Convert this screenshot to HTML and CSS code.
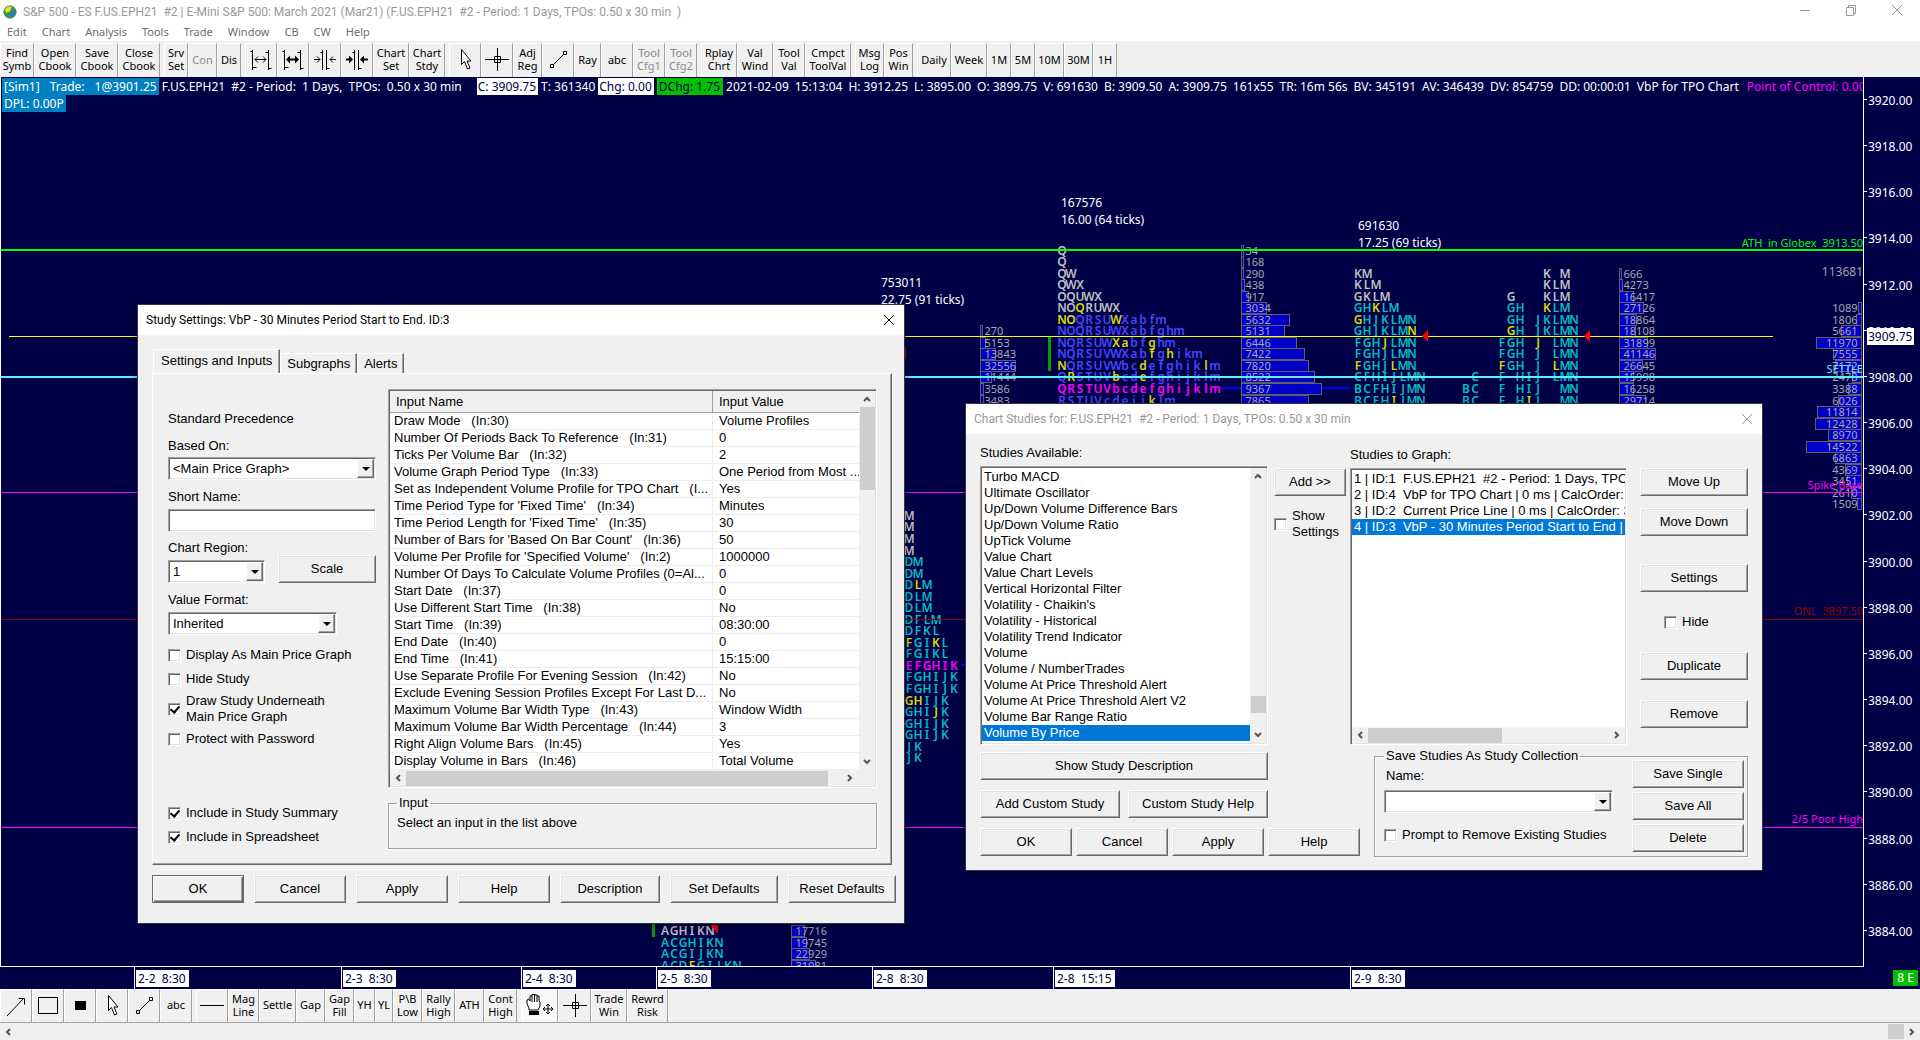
FILE: index.html
```html
<!DOCTYPE html>
<html lang="en">
<head>
<meta charset="utf-8">
<title>S&amp;P 500 - ES F.US.EPH21 #2</title>
<link rel="stylesheet" href="styles.css">
</head>
<body>
<svg class="defs" aria-hidden="true">
  <symbol id="i-cursor" viewBox="0 0 24 24"><path d="M8.500 2.500v15l3-3 3 7.500 2.500-1-3-7h4z" fill="#fff" stroke="#000"/></symbol>
  <symbol id="i-cross" viewBox="0 0 24 24"><path d="M0 12.500h24M12.500 1v23M9.500 9.500h6v6h-6z" fill="none" stroke="#000"/></symbol>
  <symbol id="i-line" viewBox="0 0 24 24"><path d="M7 18L18 7M4.500 17.500h3v3h-3zM17.500 4.500h3v3h-3z" fill="none" stroke="#000"/></symbol>
  <symbol id="i-close" viewBox="0 0 12 12"><path d="M1 1l10 10M11 1L1 11" fill="none" stroke="currentColor"/></symbol>
  <symbol id="i-up" viewBox="0 0 10 10"><path d="M2 7l3-3 3 3" fill="none" stroke="#555" stroke-width="2"/></symbol>
  <symbol id="i-down" viewBox="0 0 10 10"><path d="M2 3l3 3 3-3" fill="none" stroke="#555" stroke-width="2"/></symbol>
  <symbol id="i-left" viewBox="0 0 10 10"><path d="M7 2L4 5l3 3" fill="none" stroke="#555" stroke-width="2"/></symbol>
  <symbol id="i-right" viewBox="0 0 10 10"><path d="M3 2l3 3-3 3" fill="none" stroke="#555" stroke-width="2"/></symbol>
</svg>

<div class="app">
  <header class="titlebar">
    <svg class="logo" viewBox="0 0 16 16"><circle cx="8" cy="8" r="7" fill="#3c9a2e"/><path d="M2 5q3-5 8-3l-2 5-4 2z" fill="#e6e23c"/><path d="M9 8l5-3q2 6-4 9l-3-3z" fill="#2b79c9"/><circle cx="8" cy="8" r="7" fill="none" stroke="#3b7a55"/></svg>
    <h1 class="title">S&amp;P 500 - ES F.US.EPH21&nbsp; #2 | E-Mini S&amp;P 500: March 2021 (Mar21) (F.US.EPH21&nbsp; #2 - Period: 1 Days, TPOs: 0.50 x 30 min&nbsp; )</h1>
    <div class="winctl">
      <button aria-label="Minimize"><svg viewBox="0 0 12 12"><path d="M1 6.500h10" stroke="#999"/></svg></button>
      <button aria-label="Restore"><svg viewBox="0 0 12 12"><path d="M1.500 3.500h7v8h-7zM3.500 3.500v-2h7v8h-2" fill="none" stroke="#999"/></svg></button>
      <button aria-label="Close"><svg viewBox="0 0 12 12"><use href="#i-close"/></svg></button>
    </div>
  </header>
  <nav class="menubar">
    <a href="#">Edit</a><a href="#">Chart</a><a href="#">Analysis</a><a href="#">Tools</a><a href="#">Trade</a><a href="#">Window</a><a href="#">CB</a><a href="#">CW</a><a href="#">Help</a>
  </nav>

  <div class="toolbar">
    <div class="group"><button class="w34">Find<br>Symb</button><button class="w42">Open<br>Cbook</button><button class="w42">Save<br>Cbook</button><button class="w42">Close<br>Cbook</button></div>
    <div class="group"><button class="w24">Srv<br>Set</button><button class="w29 off">Con</button><button class="w24">Dis</button></div>
    <div class="group">
      <button class="w32" aria-label="Widen spacing"><svg viewBox="0 0 24 24"><path d="M3.500 3v20M3.500 4.500h-2M3.500 20.500h4M19.500 3v20M19.500 5.500h-3M19.500 21.500h3M6 12.500h11M9 9.500l-3 3 3 3M14 9.500l3 3-3 3" fill="none" stroke="#000"/></svg></button>
      <button class="w32" aria-label="Widen bars"><svg viewBox="0 0 24 24"><path d="M3.500 3v20M3.500 4.500h-2M3.500 20.500h4M19.500 3v20M19.500 5.500h-3M19.500 21.500h3" fill="none" stroke="#000"/><path d="M7 12.500h9" stroke="#000" stroke-width="2"/><path d="M5 12.500l4-4v8zM18 12.500l-4-4v8z"/></svg></button>
      <button class="w32" aria-label="Narrow spacing"><svg viewBox="0 0 24 24"><path d="M9.500 3v20M9.500 5.500h-2M13.500 3v20M13.500 21.500h3M1 12.500h6M4 9.500l3 3-3 3M23 12.500h-6M20 9.500l-3 3 3 3" fill="none" stroke="#000"/></svg></button>
      <button class="w32" aria-label="Narrow bars"><svg viewBox="0 0 24 24"><path d="M9.500 3v20M9.500 5.500h-2M13.500 3v20M13.500 21.500h3" fill="none" stroke="#000"/><path d="M1 12.500h5M23 12.500h-5" stroke="#000" stroke-width="2"/><path d="M8 12.500l-4-4v8zM15 12.500l4-4v8z"/></svg></button>
      <button class="w36">Chart<br>Set</button><button class="w36">Chart<br>Stdy</button>
    </div>
    <div class="group">
      <button class="w32" aria-label="Pointer"><svg viewBox="0 0 24 24"><use href="#i-cursor"/></svg></button>
      <button class="w32" aria-label="Crosshair"><svg viewBox="0 0 24 24"><use href="#i-cross"/></svg></button>
      <button class="w29">Adj<br>Reg</button>
      <button class="w32" aria-label="Line"><svg viewBox="0 0 24 24"><use href="#i-line"/></svg></button>
      <button class="w27">Ray</button><button class="w32">abc</button><button class="w32 off">Tool<br>Cfg1</button><button class="w32 off">Tool<br>Cfg2</button>
    </div>
    <div class="group"><button class="w36">Rplay<br>Chrt</button><button class="w36">Val<br>Wind</button><button class="w32">Tool<br>Val</button><button class="w46">Cmpct<br>ToolVal</button></div>
    <div class="group"><button class="w29">Msg<br>Log</button><button class="w29">Pos<br>Win</button></div>
    <div class="group"><button class="w34">Daily</button><button class="w36">Week</button><button class="w24">1M</button><button class="w24">5M</button><button class="w29">10M</button><button class="w29">30M</button><button class="w24">1H</button></div>
  </div>

  <main class="chart">
    <div class="plot">
      <svg id="plot" class="canvas"></svg>
      <div class="info">
        <div class="seg trade"><span>[Sim1]</span><span>Trade:</span><span>1@3901.25</span></div>
        <div class="seg name"><span>F.US.EPH21</span><span>#2 - Period:</span><span>1 Days,</span><span>TPOs:</span><span>0.50 x 30 min</span></div>
        <span class="hl">C: 3909.75</span><span>T: 361340</span><span class="hl">Chg: 0.00</span><span class="up">DChg: 1.75</span>
        <div class="seg quote"><span>2021-02-09</span><span>15:13:04</span><span>H: 3912.25</span><span>L: 3895.00</span><span>O: 3899.75</span><span>V: 691630</span><span>B: 3909.50</span><span>A: 3909.75</span><span>161x55</span><span>TR: 16m 56s</span><span>BV: 345191</span><span>AV: 346439</span><span>DV: 854759</span><span>DD: 00:00:01</span><span>VbP for TPO Chart</span></div>
        <span class="poc">Point of Control: 0.00</span>
      </div>
      <div class="info"><span class="trade">DPL: 0.00P</span></div>
    </div>
    <svg id="prices" class="prices"></svg>
    <svg id="dates" class="dates"></svg>
    <div class="corner"><span>8 E</span></div>
  </main>

  <div class="toolbar bottom">
    <div class="group">
      <button class="w32" aria-label="Arrow"><svg viewBox="0 0 24 24"><path d="M3 23L20 5M14.500 5.500h6v6" fill="none" stroke="#000"/></svg></button>
      <button class="w32" aria-label="Rectangle"><svg viewBox="0 0 24 24"><path d="M2.500 4.500h19v16h-19z" fill="none" stroke="#000"/></svg></button>
      <button class="w32" aria-label="Filled rectangle"><svg viewBox="0 0 24 24"><path d="M7 8h11v9H7z"/></svg></button>
      <button class="w32" aria-label="Pointer"><svg viewBox="0 0 24 24"><use href="#i-cursor"/></svg></button>
      <button class="w32" aria-label="Line"><svg viewBox="0 0 24 24"><use href="#i-line"/></svg></button>
      <button class="w32">abc</button>
    </div>
    <div class="group">
      <button class="w32" aria-label="Horizontal line"><svg viewBox="0 0 24 24"><path d="M0 12.500h24" stroke="#000"/></svg></button>
      <button class="w31">Mag<br>Line</button><button class="w37">Settle</button><button class="w29">Gap</button><button class="w29">Gap<br>Fill</button><button class="w21">YH</button><button class="w18">YL</button><button class="w29">P\B<br>Low</button><button class="w33">Rally<br>High</button><button class="w29">ATH</button><button class="w33">Cont<br>High</button>
    </div>
    <div class="group">
      <button class="w37 pressed" aria-label="Hand"><svg class="wide" viewBox="0 0 30 24"><path d="M4 17v-2l-2-4V7l2-1 1 2V3h2V1.500h3V2h2v1h2v5l1 1v4l-2 4z" fill="#fff" stroke="#000"/><path d="M7 3v6M9.500 2v7M12 3v6" stroke="#000"/><path d="M4 18h10v4H4z"/><path d="M18 16h10M23 11v10M20 14l-2 2 2 2M26 14l2 2-2 2M21 13l2-2 2 2M21 19l2 2 2-2" fill="none" stroke="#000"/></svg></button>
      <button class="w33" aria-label="Crosshair"><svg viewBox="0 0 24 24"><use href="#i-cross"/></svg></button>
      <button class="w36">Trade<br>Win</button><button class="w41">Rewrd<br>Risk</button>
    </div>
  </div>
  <div class="hscroll page"><svg viewBox="0 0 10 10"><use href="#i-left"/></svg><i></i><svg viewBox="0 0 10 10"><use href="#i-right"/></svg></div>
</div>

<section class="dialog settings" aria-label="Study Settings">
  <div class="dtitle"><h2>Study Settings: VbP - 30 Minutes Period Start to End. ID:3</h2><button aria-label="Close"><svg viewBox="0 0 12 12"><use href="#i-close"/></svg></button></div>
  <div class="sbody">
    <div class="tabs"><button class="tab on">Settings and Inputs</button><button class="tab">Subgraphs</button><button class="tab">Alerts</button></div>
    <div class="panel">
      <div class="left">
        <p class="prec">Standard Precedence</p>
        <label for="based">Based On:</label>
        <span class="sel"><select id="based"><option>&lt;Main Price Graph&gt;</option></select><i></i></span>
        <label for="short">Short Name:</label>
        <input class="txt" id="short" type="text">
        <div class="region">
          <div class="rcol"><label for="region">Chart Region:</label><span class="sel"><select id="region"><option>1</option></select><i></i></span></div>
          <button class="btn">Scale</button>
        </div>
        <label for="format">Value Format:</label>
        <span class="sel mid"><select id="format"><option>Inherited</option></select><i></i></span>
        <div class="checks">
          <label class="check"><input type="checkbox">Display As Main Price Graph</label>
          <label class="check"><input type="checkbox">Hide Study</label>
          <label class="check two"><input type="checkbox" checked><span>Draw Study Underneath<br>Main Price Graph</span></label>
          <label class="check"><input type="checkbox">Protect with Password</label>
        </div>
        <div class="checks low">
          <label class="check"><input type="checkbox" checked>Include in Study Summary</label>
          <label class="check"><input type="checkbox" checked>Include in Spreadsheet</label>
        </div>
      </div>
      <div class="right">
        <div class="listview">
          <table>
            <thead><tr><th>Input Name</th><th>Input Value</th></tr></thead>
            <tbody>
              <tr><td>Draw Mode&nbsp;&nbsp; (In:30)</td><td>Volume Profiles</td></tr>
              <tr><td>Number Of Periods Back To Reference&nbsp;&nbsp; (In:31)</td><td>0</td></tr>
              <tr><td>Ticks Per Volume Bar&nbsp;&nbsp; (In:32)</td><td>2</td></tr>
              <tr><td>Volume Graph Period Type&nbsp;&nbsp; (In:33)</td><td>One Period from Most ...</td></tr>
              <tr><td>Set as Independent Volume Profile for TPO Chart&nbsp;&nbsp; (I...</td><td>Yes</td></tr>
              <tr><td>Time Period Type for 'Fixed Time'&nbsp;&nbsp; (In:34)</td><td>Minutes</td></tr>
              <tr><td>Time Period Length for 'Fixed Time'&nbsp;&nbsp; (In:35)</td><td>30</td></tr>
              <tr><td>Number of Bars for 'Based On Bar Count'&nbsp;&nbsp; (In:36)</td><td>50</td></tr>
              <tr><td>Volume Per Profile for 'Specified Volume'&nbsp;&nbsp; (In:2)</td><td>1000000</td></tr>
              <tr><td>Number Of Days To Calculate Volume Profiles (0=Al...</td><td>0</td></tr>
              <tr><td>Start Date&nbsp;&nbsp; (In:37)</td><td>0</td></tr>
              <tr><td>Use Different Start Time&nbsp;&nbsp; (In:38)</td><td>No</td></tr>
              <tr><td>Start Time&nbsp;&nbsp; (In:39)</td><td>08:30:00</td></tr>
              <tr><td>End Date&nbsp;&nbsp; (In:40)</td><td>0</td></tr>
              <tr><td>End Time&nbsp;&nbsp; (In:41)</td><td>15:15:00</td></tr>
              <tr><td>Use Separate Profile For Evening Session&nbsp;&nbsp; (In:42)</td><td>No</td></tr>
              <tr><td>Exclude Evening Session Profiles Except For Last D...</td><td>No</td></tr>
              <tr><td>Maximum Volume Bar Width Type&nbsp;&nbsp; (In:43)</td><td>Window Width</td></tr>
              <tr><td>Maximum Volume Bar Width Percentage&nbsp;&nbsp; (In:44)</td><td>3</td></tr>
              <tr><td>Right Align Volume Bars&nbsp;&nbsp; (In:45)</td><td>Yes</td></tr>
              <tr><td>Display Volume in Bars&nbsp;&nbsp; (In:46)</td><td>Total Volume</td></tr>
            </tbody>
          </table>
          <div class="vscroll"><svg viewBox="0 0 10 10"><use href="#i-up"/></svg><i></i><svg viewBox="0 0 10 10"><use href="#i-down"/></svg></div>
          <div class="hscroll"><svg viewBox="0 0 10 10"><use href="#i-left"/></svg><i></i><svg viewBox="0 0 10 10"><use href="#i-right"/></svg></div>
        </div>
        <fieldset><legend>Input</legend>Select an input in the list above</fieldset>
      </div>
    </div>
    <div class="actions"><button class="btn default">OK</button><button class="btn">Cancel</button><button class="btn">Apply</button><button class="btn">Help</button><button class="btn b100">Description</button><button class="btn b108">Set Defaults</button><button class="btn b108">Reset Defaults</button></div>
  </div>
</section>

<section class="dialog studies" aria-label="Chart Studies">
  <div class="dtitle idle"><h2>Chart Studies for: F.US.EPH21&nbsp; #2 - Period: 1 Days, TPOs: 0.50 x 30 min</h2><button aria-label="Close"><svg viewBox="0 0 12 12"><use href="#i-close"/></svg></button></div>
  <div class="cbody">
    <div class="avail">
      <p>Studies Available:</p>
      <div class="listbox">
        <ul>
          <li>Turbo MACD</li><li>Ultimate Oscillator</li><li>Up/Down Volume Difference Bars</li><li>Up/Down Volume Ratio</li><li>UpTick Volume</li><li>Value Chart</li><li>Value Chart Levels</li><li>Vertical Horizontal Filter</li><li>Volatility - Chaikin's</li><li>Volatility - Historical</li><li>Volatility Trend Indicator</li><li>Volume</li><li>Volume / NumberTrades</li><li>Volume At Price Threshold Alert</li><li>Volume At Price Threshold Alert V2</li><li>Volume Bar Range Ratio</li><li class="cur">Volume By Price</li><li>Volume By Price Range Bars</li>
        </ul>
        <div class="vscroll"><svg viewBox="0 0 10 10"><use href="#i-up"/></svg><i></i><svg viewBox="0 0 10 10"><use href="#i-down"/></svg></div>
      </div>
      <button class="btn">Show Study Description</button>
      <div class="pair"><button class="btn">Add Custom Study</button><button class="btn">Custom Study Help</button></div>
      <div class="four"><button class="btn">OK</button><button class="btn">Cancel</button><button class="btn">Apply</button><button class="btn">Help</button></div>
    </div>
    <div class="add">
      <button class="btn">Add &gt;&gt;</button>
      <label class="check two"><input type="checkbox"><span>Show<br>Settings</span></label>
    </div>
    <div class="graph">
      <div class="top">
        <div class="list2">
          <p>Studies to Graph:</p>
          <div class="listbox">
            <ul>
              <li>1 | ID:1&nbsp; F.US.EPH21&nbsp; #2 - Period: 1 Days, TPOs: 0.50</li><li>2 | ID:4&nbsp; VbP for TPO Chart | 0 ms | CalcOrder: 2</li><li>3 | ID:2&nbsp; Current Price Line | 0 ms | CalcOrder: 3</li><li class="cur">4 | ID:3&nbsp; VbP - 30 Minutes Period Start to End | 0 ms</li>
            </ul>
            <div class="hscroll"><svg viewBox="0 0 10 10"><use href="#i-left"/></svg><i></i><svg viewBox="0 0 10 10"><use href="#i-right"/></svg></div>
          </div>
        </div>
        <div class="ops">
          <button class="btn">Move Up</button><button class="btn">Move Down</button><button class="btn sp">Settings</button>
          <label class="check"><input type="checkbox">Hide</label>
          <button class="btn">Duplicate</button><button class="btn last">Remove</button>
        </div>
      </div>
      <fieldset>
        <legend>Save Studies As Study Collection</legend>
        <div class="coll">
          <label for="coll">Name:</label>
          <span class="sel"><select id="coll"><option></option></select><i></i></span>
          <label class="check"><input type="checkbox">Prompt to Remove Existing Studies</label>
        </div>
        <div class="saves"><button class="btn">Save Single</button><button class="btn">Save All</button><button class="btn">Delete</button></div>
      </fieldset>
    </div>
  </div>
</section>
<script src="chart.js"></script>
</body>
</html>
```
FILE: styles.css
```css
* { box-sizing: border-box; }
body { margin: 0; background: #f0f0f0; font: 12px/17px "Noto Sans", "Open Sans", sans-serif; color: #000; overflow: hidden; }
button, input, select { font: inherit; color: inherit; margin: 0; padding: 0; border-radius: 0; }
h1, h2, p, ul { margin: 0; padding: 0; font-weight: normal; list-style: none; }
.defs { position: absolute; width: 0; height: 0; }
.app { display: flex; flex-direction: column; height: 100vh; }

.titlebar { display: flex; align-items: center; height: 23px; background: #fff; color: #999; padding-left: 3px; flex: none; }
.logo { width: 14px; height: 16px; margin-right: 6px; }
.title { font: 12px/22px Roboto, "Noto Sans", sans-serif; flex: 1; white-space: nowrap; }
.winctl { display: flex; }
.winctl button { width: 46px; height: 20px; border: 0; background: none; color: #999; }
.winctl svg { width: 12px; height: 12px; }
.menubar { display: flex; gap: 15px; height: 18px; padding-left: 7px; background: #fff; flex: none; font-size: 11px; line-height: 18px; }
.menubar a { color: #6d6d6d; text-decoration: none; }

.toolbar { display: flex; gap: 4px; height: 36px; padding-top: 2px; background: #f0f0f0; flex: none; }
.group { display: flex; }
.toolbar button { border: 0; border-left: 1px solid #fff; border-top: 1px solid #fff; border-right: 1px solid #a0a0a0; background: #f0f0f0; font-size: 11px; line-height: 13px; padding-bottom: 3px; display: flex; align-items: center; justify-content: center; white-space: nowrap; overflow: hidden; }
.toolbar .off { color: #8a8a8a; }
.toolbar svg { width: 24px; height: 24px; flex: none; }
.toolbar svg.wide { width: 30px; }
.toolbar .pressed { background: #f8f8f8; }
.bottom { padding-top: 0; height: 34px; border-bottom: 1px solid #a0a0a0; background: #f0f0f0; }
.w18 { width: 18px; } .w21 { width: 21px; } .w24 { width: 24px; } .w27 { width: 27px; } .w29 { width: 29px; } .w31 { width: 31px; } .w32 { width: 32px; } .w33 { width: 33px; } .w34 { width: 34px; } .w36 { width: 36px; } .w37 { width: 37px; } .w41 { width: 41px; } .w42 { width: 42px; } .w46 { width: 46px; }

.chart { flex: 1; display: grid; grid-template-columns: 1fr 56px; grid-template-rows: 1fr 22px; background: #000047; color: #fff; min-height: 0; }
.plot { position: relative; overflow: hidden; border: solid #fff; border-width: 0 1px 1px; padding: 1px 0 0 1px; min-width: 0; }
.canvas { position: absolute; left: 0; top: 0; width: 100%; height: 100%; }
.prices, .dates { width: 100%; height: 100%; }
.info { display: flex; position: relative; gap: 3px; white-space: nowrap; font-size: 12px; line-height: 17px; }
.seg { display: flex; gap: 6px; flex: none; }
.info > span { flex: none; }
.info .trade { background: #0080c0; padding: 0 2px; gap: 10px; }
.info .name { padding-right: 12px; }
.info .hl { background: #fff; color: #000047; padding: 0 2px 0 1px; }
.info .up { background: #00c000; color: #000047; padding: 0 3px 0 2px; }
.info .poc { color: #f0f; padding-left: 5px; }
.corner { display: flex; justify-content: flex-end; align-items: center; padding-right: 2px; }
.corner span { background: #00c000; padding: 0 4px; line-height: 16px; }
.t12 { font-size: 12px; } .t11 { font-size: 11px; }
.tpo { font-size: 12px; font-weight: 600; text-anchor: middle; }
.end { text-anchor: end; }

.hscroll, .vscroll { display: flex; background: #f0f0f0; align-items: center; }
.hscroll { height: 16px; } .vscroll { width: 16px; flex-direction: column; }
.hscroll svg, .vscroll svg { width: 10px; height: 10px; flex: none; margin: 3px; }
.hscroll i, .vscroll i { background: #cdcdcd; display: block; }
.hscroll i { height: 15px; } .vscroll i { width: 15px; }
.page { height: 17px; flex: none; }
.page i { width: 16px; margin-left: auto; }

.dialog { position: absolute; border: 1px solid #33334d; background: #f0f0f0; font: 13px/16px "Liberation Sans", Arial, sans-serif; box-shadow: 0 2px 8px rgba(0,0,0,.4); }
.dtitle { display: flex; justify-content: space-between; height: 30px; background: #fff; padding: 0 6px 0 8px; align-items: center; }
.dtitle h2 { font: 12px/30px Roboto, "Noto Sans", sans-serif; white-space: nowrap; }
.dtitle button { border: 0; background: none; width: 18px; height: 18px; line-height: 0; }
.dtitle svg { width: 12px; height: 12px; }
.idle { color: #999; }
.btn { height: 28px; background: #f0f0f0; border: 1px solid; border-color: #fff #696969 #696969 #fff; box-shadow: inset 1px 1px #e3e3e3, inset -1px -1px #a0a0a0; white-space: nowrap; }
.btn.default { border-color: #696969; box-shadow: inset 1px 1px #fff, inset -1px -1px #696969, inset -2px -2px #a0a0a0; }
.sel { display: flex; height: 23px; background: #fff; border: 1px solid; border-color: #a0a0a0 #fff #fff #a0a0a0; box-shadow: inset 1px 1px #696969, inset -1px -1px #e3e3e3; position: relative; }
.sel select { appearance: none; border: 0; background: none; width: 100%; padding-left: 4px; outline: 0; }
.sel i { position: absolute; right: 1px; top: 1px; bottom: 1px; width: 17px; background: #f0f0f0; border: 1px solid; border-color: #fff #696969 #696969 #fff; box-shadow: inset -1px -1px #a0a0a0; pointer-events: none; }
.sel i::after { content: ""; position: absolute; left: 4px; top: 7px; border: solid transparent; border-width: 4px 4px 0; border-top-color: #000; }
.txt { display: block; width: 100%; height: 23px; background: #fff; border: 1px solid; border-color: #a0a0a0 #fff #fff #a0a0a0; box-shadow: inset 1px 1px #696969, inset -1px -1px #e3e3e3; }
.check { display: flex; align-items: center; gap: 5px; height: 24px; white-space: nowrap; }
.check.two { height: 36px; }
.check input { appearance: none; width: 13px; height: 13px; background: #fff; border: 1px solid; border-color: #a0a0a0 #fff #fff #a0a0a0; box-shadow: inset 1px 1px #696969, inset -1px -1px #e3e3e3; display: grid; place-items: center; flex: none; }
.check input:checked::after { content: ""; width: 4px; height: 7px; border: solid #000; border-width: 0 2px 2px 0; transform: rotate(40deg); margin-bottom: 2px; }
.listview, .listbox { background: #fff; border: 1px solid; border-color: #a0a0a0 #fff #fff #a0a0a0; box-shadow: inset 1px 1px #696969, inset -1px -1px #e3e3e3; padding: 1px; }
fieldset { margin: 0; border: 1px solid #a0a0a0; box-shadow: 1px 1px #fff, inset 1px 1px #fff; min-width: 0; }
legend { padding: 0 2px; line-height: 16px; }

.settings { left: 137px; top: 304px; width: 768px; height: 620px; }
.sbody { padding: 15px 8px 0 14px; }
.tabs { display: flex; align-items: flex-end; height: 23px; padding-left: 1px; position: relative; z-index: 1; }
.tab { height: 20px; border: 1px solid; border-color: #fff #696969 transparent #fff; border-bottom: 0; box-shadow: inset -1px 0 #a0a0a0; background: #f0f0f0; padding: 0 6px; white-space: nowrap; }
.tab.on { height: 24px; padding: 0 7px 2px; }
.panel { display: flex; gap: 12px; height: 492px; margin-right: 4px; padding: 15px 14px 0 15px; border: 1px solid; border-color: #fff #696969 #696969 #fff; box-shadow: inset -1px -1px #a0a0a0; }
.left { width: 208px; display: flex; flex-direction: column; }
.left label { line-height: 16px; white-space: nowrap; }
.prec { margin: 22px 0 11px; }
.left > .sel { margin: 3px 0 9px; }
.left > label { height: 16px; }
.left .txt { margin: 4px 0 8px; }
.region { display: flex; align-items: flex-end; gap: 13px; margin-bottom: 9px; }
.rcol { width: 97px; display: flex; flex-direction: column; gap: 4px; }
.region .btn { flex: 1; }
.left > .sel.mid { width: 169px; margin: 4px 0 8px; }
.checks { margin-bottom: 50px; }
.low { margin: 0; }
.right { flex: 1; min-width: 0; }
.listview { display: grid; grid-template-columns: 1fr 16px; height: 399px; }
.listview table { border-collapse: separate; border-spacing: 0; table-layout: fixed; width: 100%; height: 379px; }
th { background: #f0f0f0; text-align: left; font-weight: normal; height: 22px; padding: 0 6px; border-right: 1px solid #a0a0a0; border-bottom: 1px solid #a0a0a0; line-height: 18px; }
th:first-child { width: 323px; }
th:last-child { border-right: 0; }
td { height: 17px; padding: 0 0 0 4px; border-bottom: 1px solid #eee; border-right: 1px solid #eee; line-height: 16px; white-space: nowrap; overflow: hidden; }
td:last-child { padding-left: 6px; border-right: 0; }
.listview .vscroll i { height: 83px; }
.listview .vscroll svg:last-child { margin-top: auto; }
.listview .hscroll { grid-column: 1 / -1; }
.listview .hscroll i { width: 422px; }
.listview .hscroll svg:last-child { margin-left: 17px; }
.right fieldset { height: 54px; margin-top: 7px; padding: 4px 8px; }
.actions { display: flex; gap: 10px; margin-top: 10px; }
.actions .btn { width: 92px; } .actions .b100 { width: 100px; } .actions .b108 { width: 108px; }

.studies { left: 965px; top: 403px; width: 798px; height: 468px; }
.cbody { display: flex; gap: 6px; padding: 10px 14px 0; }
.avail { width: 288px; display: flex; flex-direction: column; }
.avail p { line-height: 16px; margin: 1px 0 5px; }
.avail .listbox { display: flex; height: 279px; margin-bottom: 7px; }
.listbox ul { flex: 1; overflow: hidden; min-width: 0; padding-top: 1px; }
.listbox li { height: 16px; line-height: 16px; padding-left: 2px; white-space: nowrap; }
.listbox .cur { background: #0078d7; color: #fff; }
.avail .vscroll i { height: 17px; margin: auto 0 14px; }
.pair { display: flex; gap: 8px; margin: 10px 0; }
.pair .btn { flex: 1; }
.four { display: flex; gap: 4px; }
.four .btn { width: 92px; flex: none; }
.add { width: 70px; padding-top: 24px; }
.add .btn { width: 72px; margin-bottom: 10px; }
.graph { flex: 1; min-width: 0; display: flex; flex-direction: column; }
.top { display: flex; gap: 13px; }
.list2 { width: 277px; }
.list2 p { margin: 3px 0 5px; }
.list2 .listbox { display: flex; flex-direction: column; height: 277px; }
.list2 .hscroll i { width: 134px; }
.list2 .hscroll svg:last-child { margin-left: auto; }
.ops { flex: 1; padding-top: 24px; display: flex; flex-direction: column; gap: 12px; }
.ops .sp { margin-top: 16px; }
.ops .check { height: 36px; padding-left: 24px; }
.ops .last { margin-top: 8px; }
.graph fieldset { display: flex; height: 109px; margin: 3px 0 0 24px; padding: 0 3px 0 9px; justify-content: space-between; }
.coll { width: 229px; padding-top: 4px; display: flex; flex-direction: column; }
.coll > label:first-child { padding-left: 2px; margin-bottom: 6px; }
.coll .check { margin-top: 10px; }
.saves { width: 112px; margin-top: -4px; display: flex; flex-direction: column; gap: 4px; }
```
FILE: chart.js
```js
// Price profile chart: letters, volume bars, levels and axes.
const NS = 'http://www.w3.org/2000/svg';
const TOP = 77;
const ROW = 11.54;
const rowY = r => 250.5 - TOP + r * ROW;
const COL = { g: '#c0c0c0', c: '#00bfbf', b: '#4646ff', m: '#ff00ff', y: '#dcdc00' };

function add(parent, tag, attrs, text) {
  const el = document.createElementNS(NS, tag);
  for (const k in attrs) el.setAttribute(k, attrs[k]);
  if (text !== undefined) el.textContent = text;
  parent.appendChild(el);
  return el;
}
const plot = document.getElementById('plot');

// Rows are "colour:letters"; letters in square brackets are highlighted.
function profile(x, first, rows) {
  rows.forEach((row, n) => {
    const [c, s] = row.split(':');
    let i = 0, hot = false;
    for (const ch of s) {
      if (ch === '[') { hot = true; continue; }
      if (ch === ']') { hot = false; continue; }
      if (ch !== ' ') add(plot, 'text', { class: 'tpo', x: x + i * 9, y: rowY(first + n) + 4, fill: hot ? COL.y : COL[c] }, ch);
      i++;
    }
  });
}
function bars(parent, x, first, rows, flip) {
  rows.forEach(([v, w], n) => {
    const y = rowY(first + n);
    add(parent, 'rect', { x: flip ? x - w : x, y: Math.round(y - 6) + .5, width: w, height: 11, fill: '#0000c8', stroke: '#606060' });
  });
  rows.forEach(([v], n) => {
    add(parent, 'text', { class: flip ? 't11 end' : 't11', x: flip ? x - 4 : x + 4, y: rowY(first + n) + 4, fill: '#a8a8b0' }, v);
  });
}
function line(x1, x2, y, color, w) {
  add(plot, 'line', { x1, x2, y1: y - TOP, y2: y - TOP, stroke: color, 'stroke-width': w });
}
function label(x, y, text, fill = '#fff', cls = 't12') {
  add(plot, 'text', { class: cls, x, y: y - TOP + 4, fill }, text);
}

profile(1061, 0, ['g:Q', 'g:Q', 'g:QW', 'g:QWX', 'g:OQUWX', 'g:NO[Q]RUWX', 'b:[NO]QRSU[W]Xabfm', 'b:NOQRSUWXabfghm',
  'b:NQRSUW[Xa]bf[g]hm', 'b:NQRSUVWXab[f]g[h]ikm', 'b:[N]QRSUVWbc[d]efghik[l]m', 'b:Q[R]STUV[b]cd[e]fghijklm',
  'm:QRSTUVbcdefghijklm', 'b:RSTUVcdeij[k]lm']);
profile(1357, 2, ['g:KM', 'g:KLM', 'g:GKLM', 'c:GH[K]LM', 'c:[G]HJKLMN', 'c:GHJKLM[N]', 'c:FGH[J]LMN', 'c:FGHJLMN',
  'c:[F]GHJ[L]MN', 'c:CFHIJLMN', 'c:BCFHIJMN', 'c:BCFH[I]JMN']);
profile(1465, 2, ['g:         K M', 'g:         KLM', 'g:     G   KLM', 'c:     GH  [K]LM', 'c:     GH JKLMN', 'c:     [G]H JKLMN',
  'c:    FGH [J] LMN', 'c:    FGH J LMN', 'c:    [F]GH J [L]MN', 'c: C  F HIJ LMN', 'c:BC  F HIJ  MN', 'c:BC  F H[I]J  MN']);
profile(908, 23, ['g:M', 'g:M', 'g:M', 'g:M', 'c:DM', 'c:DM', 'c:D[L]M', 'c:DLM', 'c:DLM', 'c:DFLM', 'c:DFKL', 'c:[F]GI[K]L', 'c:FGIKL',
  'm:EFGHIK', 'c:FGHIJK', 'c:FGHIJK', 'c:[GH]IJK', 'c:GHI[J]K', 'c:GHIJK', 'c:GHIJK', 'c:JK', 'c:JK']);
profile(664, 59, ['g:AGHIKN', 'c:ACGHIKN', 'c:ACGIJKN', 'c:ACD[F]GIJKN']);

bars(plot, 979.5, 7, [[270, 2], [5153, 5], [13843, 15], [32556, 35], [11444, 11], [3586, 3], [3483, 3]]);
bars(plot, 1240.5, 0, [[34, 2], [168, 2], [290, 2], [438, 3], [917, 7], [3034, 25], [5632, 48], [5131, 43], [6446, 55], [7422, 63],
  [7820, 67], [8522, 73], [9367, 80], [7865, 67]]);
bars(plot, 1618.5, 2, [[666, 2], [4273, 3], [16417, 14], [27126, 24], [18864, 17], [18108, 16], [31899, 28], [41146, 36], [26645, 23],
  [15998, 14], [16258, 14], [29714, 26]]);
bars(plot, 790.5, 59, [[17716, 13], [19745, 15], [22929, 18], [31081, 24]]);
const edge = add(plot, 'svg', { x: '100%', y: 0, overflow: 'visible' });
bars(edge, -1.5, 5, [[1089, 3], [1806, 5], [5661, 20], [11970, 45], [7555, 28], [7172, 26], [2478, 9], [3388, 13], [6026, 23],
  [11814, 44], [12428, 46], [8970, 33], [14522, 55], [6863, 26], [4369, 16], [3451, 14], [2610, 10], [1509, 4]], true);

line(0, '100%', 250, '#00ff00', 2);
line(8, 1772, 336.5, '#ffff00', 1);
line(0, '100%', 377, '#60f0ff', 2);
line(0, '100%', 492.5, '#ff00ff', 1);
line(0, '100%', 619.5, '#900000', 1);
line(0, '100%', 827.5, '#ff00ff', 1);
line(1221, 1240, 388, '#0000ff', 2);
line(1321, 1350, 388, '#0000ff', 2);
line(960, 964, 665, '#0000ff', 2);

add(plot, 'rect', { x: 1047, y: 337 - TOP, width: 3, height: 34, fill: '#00a000' });
add(plot, 'rect', { x: 651, y: 924 - TOP, width: 3, height: 13, fill: '#00a000' });
add(plot, 'rect', { x: 903, y: 347 - TOP, width: 2, height: 12, fill: '#c00000' });
for (const x of [1421, 1583]) add(plot, 'path', { d: `M${x} ${336 - TOP}l6-6v12z`, fill: '#ff0000' });
add(plot, 'path', { d: `M709 ${925 - TOP}h8v8z`, fill: '#ff0000' });

label(880, 283, '753011'); label(880, 300, '22.75 (91 ticks)');
label(1060, 203, '167576'); label(1060, 220, '16.00 (64 ticks)');
label(1357, 226, '691630'); label(1357, 243, '17.25 (69 ticks)');
label('100%', 243, 'ATH\u00a0 in Globex\u00a0 3913.50', '#00ff00', 't11 end');
label('100%', 272, '113681', '#a0a0a8', 't12 end');
label('100%', 369, 'SETTLE', '#60f0ff', 't11 end');
label('100%', 485, 'Spike Base', '#ff00ff', 't11 end');
label('100%', 611, 'ONL\u00a0 3897.50', '#900000', 't11 end');
label('100%', 819, '2/5 Poor High', '#ff00ff', 't11 end');

// Price axis
const prices = document.getElementById('prices');
for (let p = 3920; p >= 3884; p -= 2) {
  const y = Math.round(100 - TOP + (3920 - p) * 23.08);
  add(prices, 'line', { x1: 0, x2: 3, y1: y - .5, y2: y - .5, stroke: '#fff' });
  add(prices, 'text', { class: 't12', x: 4, y: y + 5, fill: '#fff' }, p.toFixed(2));
}
add(prices, 'rect', { x: 3, y: 328 - TOP, width: 47, height: 17, fill: '#fff' });
add(prices, 'text', { class: 't12', x: 4, y: 341 - TOP, fill: '#000047' }, '3909.75');

// Date axis
const dates = document.getElementById('dates');
[[134, '2-2\u00a0 8:30'], [341, '2-3\u00a0 8:30'], [521, '2-4\u00a0 8:30'], [656, '2-5\u00a0 8:30'], [872, '2-8\u00a0 8:30'],
  [1053, '2-8\u00a0 15:15'], [1350, '2-9\u00a0 8:30']].forEach(([x, t]) => {
  add(dates, 'line', { x1: x + .5, x2: x + .5, y1: 0, y2: 22, stroke: '#fff' });
  add(dates, 'rect', { x: x + 2, y: 3, width: t.length > 9 ? 60 : 53, height: 17, fill: '#fff' });
  add(dates, 'text', { class: 't12', x: x + 4, y: 16, fill: '#000047' }, t);
});
```
